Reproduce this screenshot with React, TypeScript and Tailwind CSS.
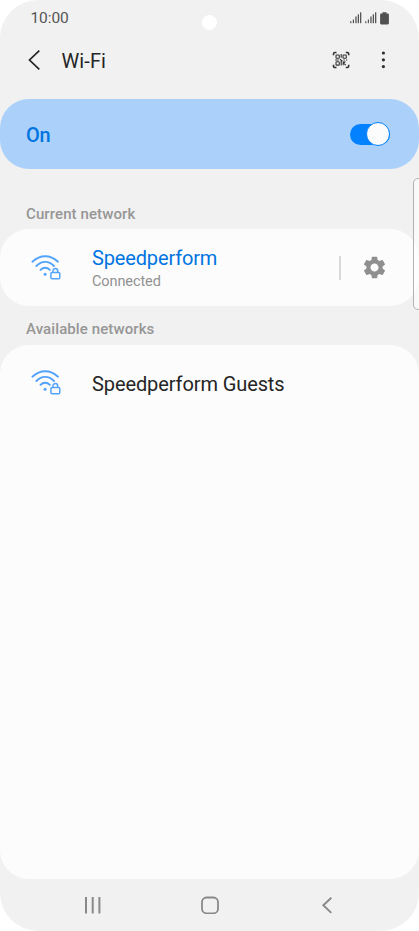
function SignalIcon() {
  return (
    <svg width="12" height="12" viewBox="0 0 12 12" fill="#555">
      <rect x="0.200" y="9.200" width="1.200" height="2" />
      <rect x="2.800" y="7.500" width="1.200" height="3.700" />
      <rect x="5.300" y="4.500" width="1.300" height="6.700" />
      <rect x="7.700" y="2.300" width="1.300" height="8.900" />
      <rect x="10" y="0.300" width="1.300" height="10.900" />
    </svg>
  );
}

function BatteryIcon() {
  return (
    <svg width="9" height="13" viewBox="0 0 9 13" fill="#505050">
      <path d="M2.500 0.300h4v1.300h1.300q1.100 0 1.100 1.100v8.600q0 1.100-1.100 1.100H1.200q-1.100 0-1.100-1.100V2.700q0-1.100 1.100-1.100h1.300z" />
    </svg>
  );
}

function QrScanIcon() {
  return (
    <svg width="18" height="18" viewBox="0 0 18 18" fill="none" stroke="#333">
      <path
        d="M1.500 4.300V2.900Q1.500 1.500 2.900 1.500H4.500M13.800 1.500h1.500q1.400 0 1.400 1.400v1.400M16.700 13.700v1.400q0 1.400-1.400 1.400h-1.500M4.500 16.500H2.900q-1.400 0-1.400-1.400v-1.400"
        strokeWidth="1.600"
      />
      <g strokeWidth="1.100">
        <rect x="4" y="4" width="3.300" height="3.300" rx="0.700" />
        <rect x="11" y="4" width="3.300" height="3.300" rx="0.700" />
        <rect x="4" y="10.800" width="3.300" height="3.300" rx="0.700" />
        <path d="M9.200 3v3.800M3.200 9h3.500M8 8.200l2.300 1.800M9.200 9.500v5M11.500 9h1.300M14 9h1.200M11.200 10.300v4M11.200 12.300l2.200-1.800M11.600 12.200l2.200 2" />
      </g>
    </svg>
  );
}

function SecureWifiIcon() {
  return (
    <svg width="30" height="26" viewBox="0 0 30 26" fill="none" stroke="#52a3fb" strokeWidth="1.900" strokeLinecap="round">
      <path d="M1.400 6.700Q7.300 1.300 14.200 1.300T27 6.700" />
      <path d="M5.400 11Q9.300 6.900 14.200 6.900T23 11" />
      <path d="M9.500 14.900Q11.600 12.700 14.200 12.700T18.900 14.900" />
      <circle cx="14.100" cy="19.200" r="1.500" fill="#52a3fb" stroke="none" />
      <g strokeWidth="1.500">
        <rect x="19.900" y="17.500" width="8.900" height="6.200" rx="1.300" />
        <path d="M21.900 17.300v-1.300a2.400 2.400 0 0 1 4.800 0v1.300" />
      </g>
    </svg>
  );
}

function GearIcon() {
  return (
    <svg width="27" height="27" viewBox="0 0 24 24" fill="#8f8f8f">
      <path d="M19.140 12.940c.04-.3.060-.61.060-.94 0-.32-.02-.64-.07-.94l2.030-1.580c.18-.14.23-.41.120-.61l-1.920-3.320c-.12-.22-.37-.29-.59-.22l-2.390.96c-.5-.38-1.030-.7-1.620-.94l-.36-2.540c-.04-.24-.24-.41-.48-.41h-3.840c-.24 0-.43.17-.47.41l-.36 2.540c-.59.24-1.130.57-1.620.94l-2.390-.96c-.22-.08-.47 0-.59.220L2.740 8.870c-.12.210-.08.470.120.610l2.030 1.580c-.05.300-.09.630-.09.940s.02.640.070.940l-2.030 1.580c-.18.140-.23.410-.12.610l1.920 3.320c.12.220.37.290.59.220l2.390-.96c.5.380 1.030.700 1.620.940l.36 2.540c.05.240.24.410.48.410h3.840c.24 0 .44-.17.470-.41l.36-2.540c.59-.24 1.130-.56 1.620-.94l2.390.96c.22.080.47 0 .59-.22l1.920-3.320c.12-.22.070-.47-.12-.61l-2.010-1.580zM12 15.600c-1.980 0-3.600-1.620-3.600-3.600s1.620-3.600 3.600-3.600 3.600 1.620 3.600 3.600-1.620 3.600-3.600 3.600z" />
    </svg>
  );
}

export default function App() {
  return (
    <div className="h-[931px] w-[419px] bg-white font-['Roboto',sans-serif]">
      <div className="relative flex h-full flex-col overflow-hidden rounded-[38px] bg-[#f1f1f1]">
        <header className="h-[99px] shrink-0">
          <div className="flex h-9 items-center justify-between pr-[30px] pl-[30.500px]">
            <span className="pt-px text-[15.500px] tracking-[-0.1px] text-[#555]">10:00</span>
            <div className="flex items-center gap-[3px]">
              <SignalIcon />
              <SignalIcon />
              <BatteryIcon />
            </div>
          </div>
          <div className="flex h-12 items-center pr-[34px] pl-7">
            <svg width="13" height="22" viewBox="0 0 13 22" fill="none" stroke="#252525" strokeWidth="1.700">
              <path d="M11.300 1.700 1.500 11l9.800 9.300" />
            </svg>
            <h1 className="ml-[20.500px] flex-1 pt-px text-[20px] tracking-[0.1px] text-[#252525]">Wi-Fi</h1>
            <QrScanIcon />
            <svg className="ml-[31px]" width="4" height="18" viewBox="0 0 4 18" fill="#2e2e2e">
              <circle cx="2.400" cy="2" r="1.600" />
              <circle cx="2.400" cy="8.800" r="1.600" />
              <circle cx="2.400" cy="15.600" r="1.600" />
            </svg>
          </div>
        </header>

        <section className="flex h-[70px] shrink-0 items-center justify-between rounded-[29px] bg-[#abd1fb] pr-[29px] pl-[26px]">
          <span className="pt-0.5 text-[20px] font-medium tracking-[-0.3px] text-[#0074e0]">On</span>
          <div className="flex h-[21px] w-10 items-center justify-end rounded-full bg-[#0381fe]">
            <div className="size-6 shrink-0 rounded-full border border-[#0381fe] bg-[#fcfcfc]" />
          </div>
        </section>

        <h2 className="h-[60px] shrink-0 pt-[35px] pl-[26px] text-[15px] leading-5 font-medium tracking-[0.1px] text-[#969696]">Current network</h2>
        <section className="flex h-[77px] shrink-0 items-center rounded-[29px] bg-[#fcfcfc] pr-[31px] pl-[31px]">
          <SecureWifiIcon />
          <div className="ml-[31px] flex-1 pt-1">
            <div className="text-[20px] leading-6 tracking-[-0.15px] text-[#0074e0]">Speedperform</div>
            <div className="text-[14.500px] leading-[23px] tracking-[-0.1px] text-[#929292]">Connected</div>
          </div>
          <div className="mr-[20.500px] h-6 w-0.5 bg-[#d9d9d9]" />
          <GearIcon />
        </section>

        <h2 className="h-[39px] shrink-0 pt-[13px] pl-[26px] text-[15px] leading-5 font-medium tracking-[0.1px] text-[#969696]">Available networks</h2>
        <section className="flex-1 rounded-[29px] bg-[#fcfcfc]">
          <div className="flex h-[76px] items-center pl-[31px]">
            <SecureWifiIcon />
            <span className="ml-[31px] pt-px text-[20px] tracking-[-0.1px] text-[#252525]">Speedperform Guests</span>
          </div>
        </section>

        <nav className="flex h-[52px] shrink-0 items-center justify-between pr-[83px] pl-[84px]">
          <svg width="18" height="18" viewBox="0 0 18 18" stroke="#898989" strokeWidth="2">
            <path d="M2 1v16.500M8.700 1v16.500M15.400 1v16.500" />
          </svg>
          <svg width="18" height="18" viewBox="0 0 18 18" fill="none" stroke="#898989" strokeWidth="1.800">
            <rect x="1" y="1.500" width="16" height="15.800" rx="4.500" />
          </svg>
          <svg width="18" height="18" viewBox="0 0 18 18" fill="none" stroke="#898989" strokeWidth="1.900">
            <path d="M13.300 1.700 5.300 9.300l8 7.600" />
          </svg>
        </nav>

        <div className="absolute top-[15px] left-[202px] size-[15px] rounded-full bg-white" />
        <div className="absolute top-[178px] left-[413px] h-[132px] w-3 rounded-[5px] border border-[#b2b2b2] bg-white/60" />
      </div>
    </div>
  );
}
